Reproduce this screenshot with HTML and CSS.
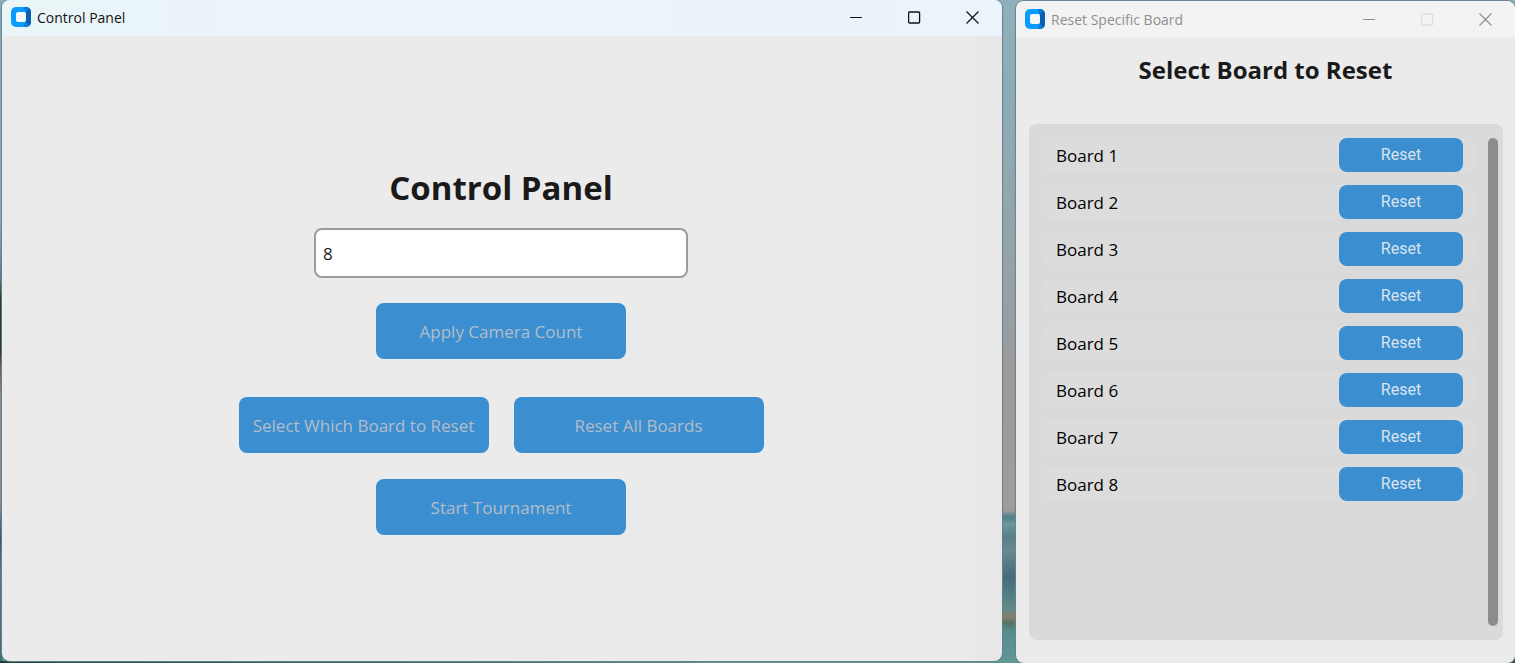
FILE: index.html
```html
<!DOCTYPE html>
<html lang="en">
<head>
<meta charset="utf-8">
<title>Control Panel</title>
<link rel="stylesheet" href="styles.css">
</head>
<body class="desktop">
<svg class="defs" width="0" height="0" aria-hidden="true">
  <symbol id="app" viewBox="0 0 20 20">
    <rect width="20" height="20" rx="5" fill="#0a9bff"/>
    <path d="M15 0a5 5 0 0 1 5 5v10a5 5 0 0 1-5 5l-2-1 2-4V5l-2-4z" fill="#0a5fb4"/>
    <path d="M13 0h2l3 2-3 3zM13 20h2l3-2-3-3z" fill="#0a7fe0"/>
    <rect x="5" y="5" width="10" height="10" rx="2" fill="#f4f8fb"/>
  </symbol>
  <symbol id="min" viewBox="0 0 13 13"><path d="M0 6.500h12" stroke="currentColor" fill="none"/></symbol>
  <symbol id="max" viewBox="0 0 13 13"><rect x=".6" y="1" width="11" height="11" rx="1" stroke="currentColor" stroke-width="1.3" fill="none"/></symbol>
  <symbol id="close" viewBox="0 0 13 13"><path d="M.5.5l12 12M12.500.5l-12 12" stroke="currentColor" stroke-width="1.2" fill="none"/></symbol>
</svg>

<main class="window window-main">
  <header class="titlebar titlebar-active">
    <svg class="app-icon" aria-hidden="true"><use href="#app"/></svg>
    <span class="caption">Control Panel</span>
    <div class="controls">
      <button class="control" aria-label="Minimize"><svg class="glyph"><use href="#min"/></svg></button>
      <button class="control" aria-label="Maximize"><svg class="glyph"><use href="#max"/></svg></button>
      <button class="control" aria-label="Close"><svg class="glyph"><use href="#close"/></svg></button>
    </div>
  </header>
  <section class="panel">
    <h1 class="title">Control Panel</h1>
    <input class="count" type="text" value="8" aria-label="Camera count">
    <button class="action">Apply Camera Count</button>
    <div class="action-row">
      <button class="action">Select Which Board to Reset</button>
      <button class="action">Reset All Boards</button>
    </div>
    <button class="action">Start Tournament</button>
  </section>
</main>

<aside class="window window-boards">
  <header class="titlebar titlebar-inactive">
    <svg class="app-icon" aria-hidden="true"><use href="#app"/></svg>
    <span class="caption">Reset Specific Board</span>
    <div class="controls">
      <button class="control" aria-label="Minimize"><svg class="glyph"><use href="#min"/></svg></button>
      <button class="control" aria-label="Maximize" disabled><svg class="glyph"><use href="#max"/></svg></button>
      <button class="control" aria-label="Close"><svg class="glyph"><use href="#close"/></svg></button>
    </div>
  </header>
  <h2 class="subtitle">Select Board to Reset</h2>
  <div class="boards">
    <ul class="board-list">
      <li class="board"><span>Board 1</span><button class="reset">Reset</button></li>
      <li class="board"><span>Board 2</span><button class="reset">Reset</button></li>
      <li class="board"><span>Board 3</span><button class="reset">Reset</button></li>
      <li class="board"><span>Board 4</span><button class="reset">Reset</button></li>
      <li class="board"><span>Board 5</span><button class="reset">Reset</button></li>
      <li class="board"><span>Board 6</span><button class="reset">Reset</button></li>
      <li class="board"><span>Board 7</span><button class="reset">Reset</button></li>
      <li class="board"><span>Board 8</span><button class="reset">Reset</button></li>
    </ul>
    <div class="scrollbar"></div>
  </div>
</aside>
</body>
</html>
```

FILE: styles.css
```css
* { box-sizing: border-box; }

.desktop {
  margin: 0;
  height: 100vh;
  display: flex;
  gap: 14px;
  padding-left: 2px;
  overflow: hidden;
  font-family: "Open Sans", "Noto Sans", sans-serif;
  color: #1a1a1a;
  background:
    linear-gradient(90deg, #1d3f3b, #568b8c) left bottom / 700px 2px no-repeat,
    linear-gradient(#35502a, #35502a) right bottom / 12px 12px no-repeat,
    linear-gradient(#86aebb 0, #86aebb 34%, #57798a 42%, #2b3020 45%, #2b3020 53%, #6b5654 55%, #8f8c96 60%, #8f8c96 76%, #2f4f74 81%, #4f7f88 86%, #3f6d6c 100%) left top / 2px 100% no-repeat,
    linear-gradient(#8fb0bd 0, #8dabb5 15%, #93a5ab 35%, #9c9b9d 55%, #a19c9c 76%, #9b9a9b 77%, #4e7f8a 78%, #6f979c 79%, #568087 81%, #68898e 83%, #456b7d 87%, #548184 90%, #648a88 92%, #8c7c6c 93%, #557466 94%, #568b8c 95%, #629798 100%);
}

.defs { position: absolute; }

.window {
  display: flex;
  flex-direction: column;
  min-width: 0;
  background: #ebebeb;
  overflow: hidden;
}

.window-main {
  flex: 1000;
  margin-bottom: 2px;
  border-radius: 8px;
  background: linear-gradient(90deg, #ebebeb 95%, #e7e7e7 100%);
  box-shadow: 0 0 1px 1px #65828c;
}

.window-boards {
  flex: 499;
  margin-top: 1px;
  border-radius: 8px;
  padding-bottom: 23px;
  box-shadow: 0 0 1px 1px #65828c;
}

.titlebar {
  display: flex;
  align-items: center;
  padding-left: 9px;
  font-size: 14px;
}

.titlebar-active {
  height: 36px;
  padding-bottom: 2px;
  background: linear-gradient(90deg, #eaf5f8, #ebf3fb);
  color: #111;
}

.titlebar-inactive {
  height: 37px;
  padding-bottom: 1px;
  background: #f3f3f3;
  color: #8f8f8f;
}

.app-icon { width: 20px; height: 20px; margin-right: 6px; }

.caption { flex: 1; }

.controls { display: flex; padding-right: 1px; }

.control {
  width: 58px;
  height: 34px;
  display: grid;
  place-items: center;
  padding: 0;
  border: 0;
  background: none;
  color: inherit;
}

.control:disabled { color: #dedede; }

.glyph { width: 13px; height: 13px; }

.panel {
  flex: 1;
  display: flex;
  flex-direction: column;
  align-items: center;
  justify-content: center;
  padding-right: 2px;
}

.title {
  margin: 0 0 14px;
  font-size: 33px;
  line-height: 52px;
  font-weight: 700;
}

.count {
  width: 374px;
  height: 50px;
  margin-bottom: 25px;
  padding: 0 7px;
  border: 2px solid #979da2;
  border-radius: 8px;
  background: #fff;
  color: #1a1a1a;
  font: 17px "Open Sans", "Noto Sans", sans-serif;
}

.action {
  width: 250px;
  height: 56px;
  padding: 0;
  border: 0;
  border-radius: 8px;
  background: #3b8ed0;
  color: #b4bdc8;
  font: 17px "Open Sans", "Noto Sans", sans-serif;
}

.action-row {
  display: flex;
  gap: 25px;
  margin: 38px 0 26px;
}

.subtitle {
  margin: 15px 0 37px;
  font-size: 24px;
  line-height: 34px;
  font-weight: 700;
  text-align: center;
}

.boards {
  flex: 1;
  display: flex;
  gap: 13px;
  margin: 0 12px 0 13px;
  padding: 14px 5px 14px 13px;
  border-radius: 8px;
  background: #dadada;
}

.board-list {
  flex: 1;
  display: flex;
  flex-direction: column;
  gap: 13px;
  margin: 0;
  padding: 0;
  list-style: none;
}

.board {
  display: flex;
  align-items: center;
  justify-content: space-between;
  padding: 0 12px 0 14px;
  border-radius: 8px;
  background: #dcdcdc;
  color: #000;
  font-size: 17px;
}

.reset {
  width: 124px;
  height: 34px;
  padding: 0 0 2px;
  border: 0;
  border-radius: 8px;
  background: #3b8ed0;
  color: #dce4ee;
  font: 16px Roboto, sans-serif;
}

.scrollbar {
  width: 10px;
  border-radius: 5px;
  background: #8c8c8c;
}
```
